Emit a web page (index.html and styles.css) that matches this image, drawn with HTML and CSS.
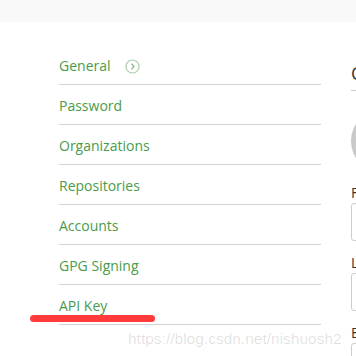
FILE: index.html
```html
<!DOCTYPE html>
<html lang="en">
<head>
    <meta charset="UTF-8">
    <meta name="viewport" content="width=device-width, initial-scale=1.0">
    <title>Settings</title>
    <link rel="stylesheet" href="styles.css">
</head>
<body>
    <div class="top-bar"></div>

    <div class="settings">
        <ul class="side-menu">
            <li>
                <a href="#">General</a>
                <svg class="arrow-icon" width="15" height="15" viewBox="0 0 15 15">
                    <circle cx="7.5" cy="7.5" r="6.5" fill="none" stroke="#a9cfa9" stroke-width="1.2"/>
                    <path d="M6.3 4.6 L9 7.5 L6.3 10.4" fill="none" stroke="#7fb87f" stroke-width="1.2"/>
                </svg>
            </li>
            <li><a href="#">Password</a></li>
            <li><a href="#">Organizations</a></li>
            <li><a href="#">Repositories</a></li>
            <li><a href="#">Accounts</a></li>
            <li><a href="#">GPG Signing</a></li>
            <li><a href="#">API Key</a></li>
        </ul>

        <div class="profile">
            <h2 class="profile-title">Change Profile</h2>
            <div class="avatar"></div>

            <div class="form-group">
                <label>First Name</label>
                <input type="text" class="form-control">
            </div>
            <div class="form-group">
                <label>Last Name</label>
                <input type="text" class="form-control">
            </div>
            <div class="form-group">
                <label>Email</label>
                <input type="text" class="form-control">
            </div>
        </div>
    </div>

    <!-- annotation on top of the screenshot -->
    <div class="red-mark"></div>
    <div class="watermark">https://blog.csdn.net/nishuosh2</div>
</body>
</html>
```

FILE: styles.css
```css
* {
    margin: 0;
    padding: 0;
    box-sizing: border-box;
}

body {
    background-color: #fff;
    font-family: 'Open Sans', sans-serif;
    width: 356px;
    height: 356px;
    overflow: hidden;
    position: relative;
}

.top-bar {
    height: 22px;
    background-color: #f9f9f9;
}

.settings {
    display: flex;
    gap: 30px;
    padding-left: 59px;
    width: 700px;
}

.side-menu {
    list-style: none;
    width: 262px;
    flex-shrink: 0;
    margin-top: 23px;
}

.side-menu li {
    display: flex;
    align-items: center;
    padding: 11px 0 8px;
    line-height: 20px;
    border-bottom: 1px solid #d3d3d3;
}

.side-menu a {
    color: #4a9b4a;
    text-decoration: none;
    font-size: 14px;
}

.arrow-icon {
    margin-left: 14px;
}

.profile {
    width: 300px;
    flex-shrink: 0;
    padding-top: 39px;
}

.profile-title {
    font-size: 18px;
    font-weight: 400;
    line-height: 24px;
    color: #333;
    padding-bottom: 5px;
    border-bottom: 1px solid #ccc;
    white-space: nowrap;
}

.avatar {
    width: 64px;
    height: 64px;
    border-radius: 50%;
    background: linear-gradient(90deg, #c8c8c8, #e0e0e0);
    margin: 18px 0 10px;
}

.form-group {
    margin-bottom: 12px;
}

.form-group label {
    display: block;
    font-size: 14px;
    line-height: 20px;
    color: #333;
}

.form-control {
    display: block;
    width: 100%;
    height: 38px;
    border: 1px solid #ccc;
    border-radius: 3px;
}

.red-mark {
    position: absolute;
    left: 30px;
    top: 315px;
    width: 125px;
    height: 7px;
    border-radius: 4px;
    background-color: #ff3b3b;
}

.watermark {
    position: absolute;
    left: 128px;
    top: 330px;
    font-family: 'Liberation Sans', sans-serif;
    font-size: 15.5px;
    color: rgba(0, 0, 0, 0.13);
    white-space: nowrap;
}
```
